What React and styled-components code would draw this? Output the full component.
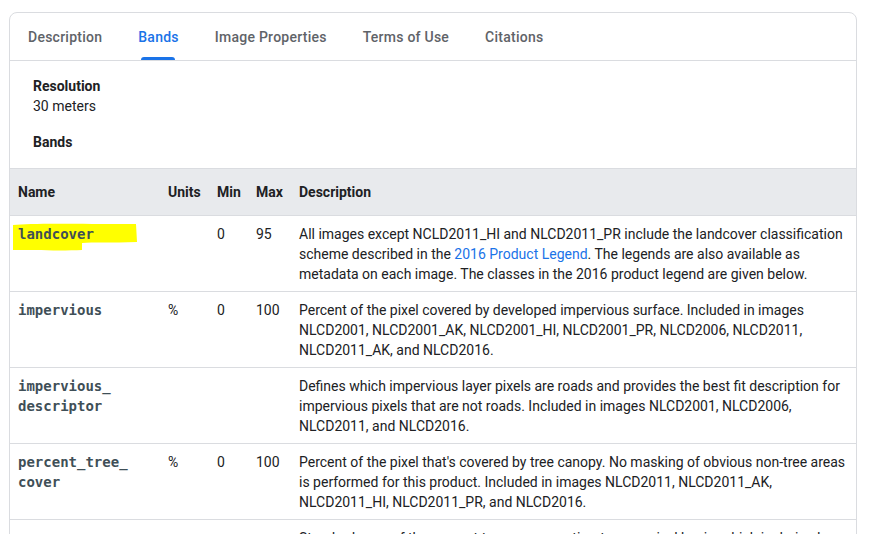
import React from "react";
import styled, { createGlobalStyle } from "styled-components";

const Global = createGlobalStyle`
  html, body { margin: 0; padding: 0; background: #ffffff; overflow: hidden; }
  body { font-family: Roboto, "Noto Sans", Arial, sans-serif; color: #202124; }
`;

const Page = styled.div`
  padding: 12px 0 0 9px;
  width: 885px;
  box-sizing: border-box;
`;

const Card = styled.section`
  width: 848px;
  box-sizing: border-box;
  border: 1px solid #dadce0;
  border-radius: 8px;
  background: #fff;
`;

const TabBar = styled.nav`
  display: flex;
  height: 47px;
  border-bottom: 1px solid #dadce0;
`;

const Tab = styled.div`
  position: relative;
  display: flex;
  align-items: center;
  padding: 0 18px;
  font-size: 14px;
  font-weight: 500;
  letter-spacing: 0.25px;
  color: ${(p) => (p.$active ? "#1a73e8" : "#5f6368")};
  white-space: nowrap;
  &::after {
    content: "";
    display: ${(p) => (p.$active ? "block" : "none")};
    position: absolute;
    left: 21px;
    right: 22px;
    bottom: 0;
    height: 3px;
    border-radius: 3px 3px 0 0;
    background: #1a73e8;
  }
`;

const Summary = styled.div`
  padding: 15px 23px 16px;
  display: flex;
  flex-direction: column;
  gap: 16px;
  font-size: 14px;
  line-height: 20px;
`;

const Field = styled.div`
  display: flex;
  flex-direction: column;
`;

const Label = styled.div`
  font-weight: 700;
  color: #202124;
`;

const Value = styled.div`
  color: #202124;
`;

const Table = styled.table`
  width: 100%;
  border-collapse: collapse;
  table-layout: fixed;
  font-size: 14px;
  line-height: 20px;
`;

const HeadCell = styled.th`
  text-align: left;
  font-weight: 700;
  padding: 13px 8px 13px;
  background: #e8eaed;
  color: #202124;
  border-top: 1px solid #dadce0;
  white-space: nowrap;
`;

const Row = styled.tr`
  border-top: 1px solid #dadce0;
`;

const Cell = styled.td`
  position: relative;
  vertical-align: top;
  padding: 8px 8px 7px;
  color: #202124;
`;

const NameCode = styled.code`
  position: relative;
  z-index: 1;
  font-family: "DejaVu Sans Mono", "Liberation Mono", monospace;
  font-size: 14px;
  font-weight: 700;
  color: #3f4f57;
  line-height: 20px;
`;

const Highlight = styled.svg`
  position: absolute;
  left: 2px;
  top: 7px;
  z-index: 0;
`;

const Link = styled.a`
  color: #1a73e8;
  text-decoration: none;
`;

const tabs = ["Description", "Bands", "Image Properties", "Terms of Use", "Citations"];

const rows = [
  {
    name: ["landcover"],
    units: "",
    min: "0",
    max: "95",
    highlight: true,
    desc: (
      <>
        All images except NCLD2011_HI and NLCD2011_PR include the landcover classification scheme
        described in the <Link href="#">2016 Product Legend</Link>. The legends are also available as
        metadata on each image. The classes in the 2016 product legend are given below.
      </>
    ),
  },
  {
    name: ["impervious"],
    units: "%",
    min: "0",
    max: "100",
    desc:
      "Percent of the pixel covered by developed impervious surface. Included in images NLCD2001, NLCD2001_AK, NLCD2001_HI, NLCD2001_PR, NLCD2006, NLCD2011, NLCD2011_AK, and NLCD2016.",
  },
  {
    name: ["impervious_", "descriptor"],
    units: "",
    min: "",
    max: "",
    desc:
      "Defines which impervious layer pixels are roads and provides the best fit description for impervious pixels that are not roads. Included in images NLCD2001, NLCD2006, NLCD2011, and NLCD2016.",
  },
  {
    name: ["percent_tree_", "cover"],
    units: "%",
    min: "0",
    max: "100",
    desc:
      "Percent of the pixel that's covered by tree canopy. No masking of obvious non-tree areas is performed for this product. Included in images NLCD2011, NLCD2011_AK, NLCD2011_HI, NLCD2011_PR, and NLCD2016.",
  },
  {
    name: [""],
    units: "",
    min: "",
    max: "",
    desc:
      "Standard error of the percent tree canopy estimate, on a pixel basis, which is derived from the model used to produce the tree canopy product.",
  },
];

function Name({ parts }) {
  return (
    <NameCode>
      {parts.map((p, i) => (
        <React.Fragment key={i}>
          {p}
          {i < parts.length - 1 && <wbr />}
        </React.Fragment>
      ))}
    </NameCode>
  );
}

export default function App() {
  return (
    <>
      <Global />
      <Page>
        <Card>
          <TabBar>
            {tabs.map((t) => (
              <Tab key={t} $active={t === "Bands"}>
                {t}
              </Tab>
            ))}
          </TabBar>
          <Summary>
            <Field>
              <Label>Resolution</Label>
              <Value>30 meters</Value>
            </Field>
            <Field>
              <Label>Bands</Label>
            </Field>
          </Summary>
          <Table>
            <colgroup>
              <col style={{ width: "150px" }} />
              <col style={{ width: "49px" }} />
              <col style={{ width: "39px" }} />
              <col style={{ width: "43px" }} />
              <col />
            </colgroup>
            <thead>
              <tr>
                <HeadCell>Name</HeadCell>
                <HeadCell>Units</HeadCell>
                <HeadCell>Min</HeadCell>
                <HeadCell>Max</HeadCell>
                <HeadCell>Description</HeadCell>
              </tr>
            </thead>
            <tbody>
              {rows.map((r, i) => (
                <Row key={i}>
                  <Cell>
                    {r.highlight && (
                      <Highlight width="126" height="28" viewBox="0 0 126 28">
                        <path
                          d="M1 2 C20 0 60 1 124 1 L125 19 C100 20 80 19 70 20 L70 27 C50 28 20 27 1 27 Z"
                          fill="#ffff00"
                        />
                      </Highlight>
                    )}
                    <Name parts={r.name} />
                  </Cell>
                  <Cell>{r.units}</Cell>
                  <Cell>{r.min}</Cell>
                  <Cell>{r.max}</Cell>
                  <Cell>{r.desc}</Cell>
                </Row>
              ))}
            </tbody>
          </Table>
        </Card>
      </Page>
    </>
  );
}
